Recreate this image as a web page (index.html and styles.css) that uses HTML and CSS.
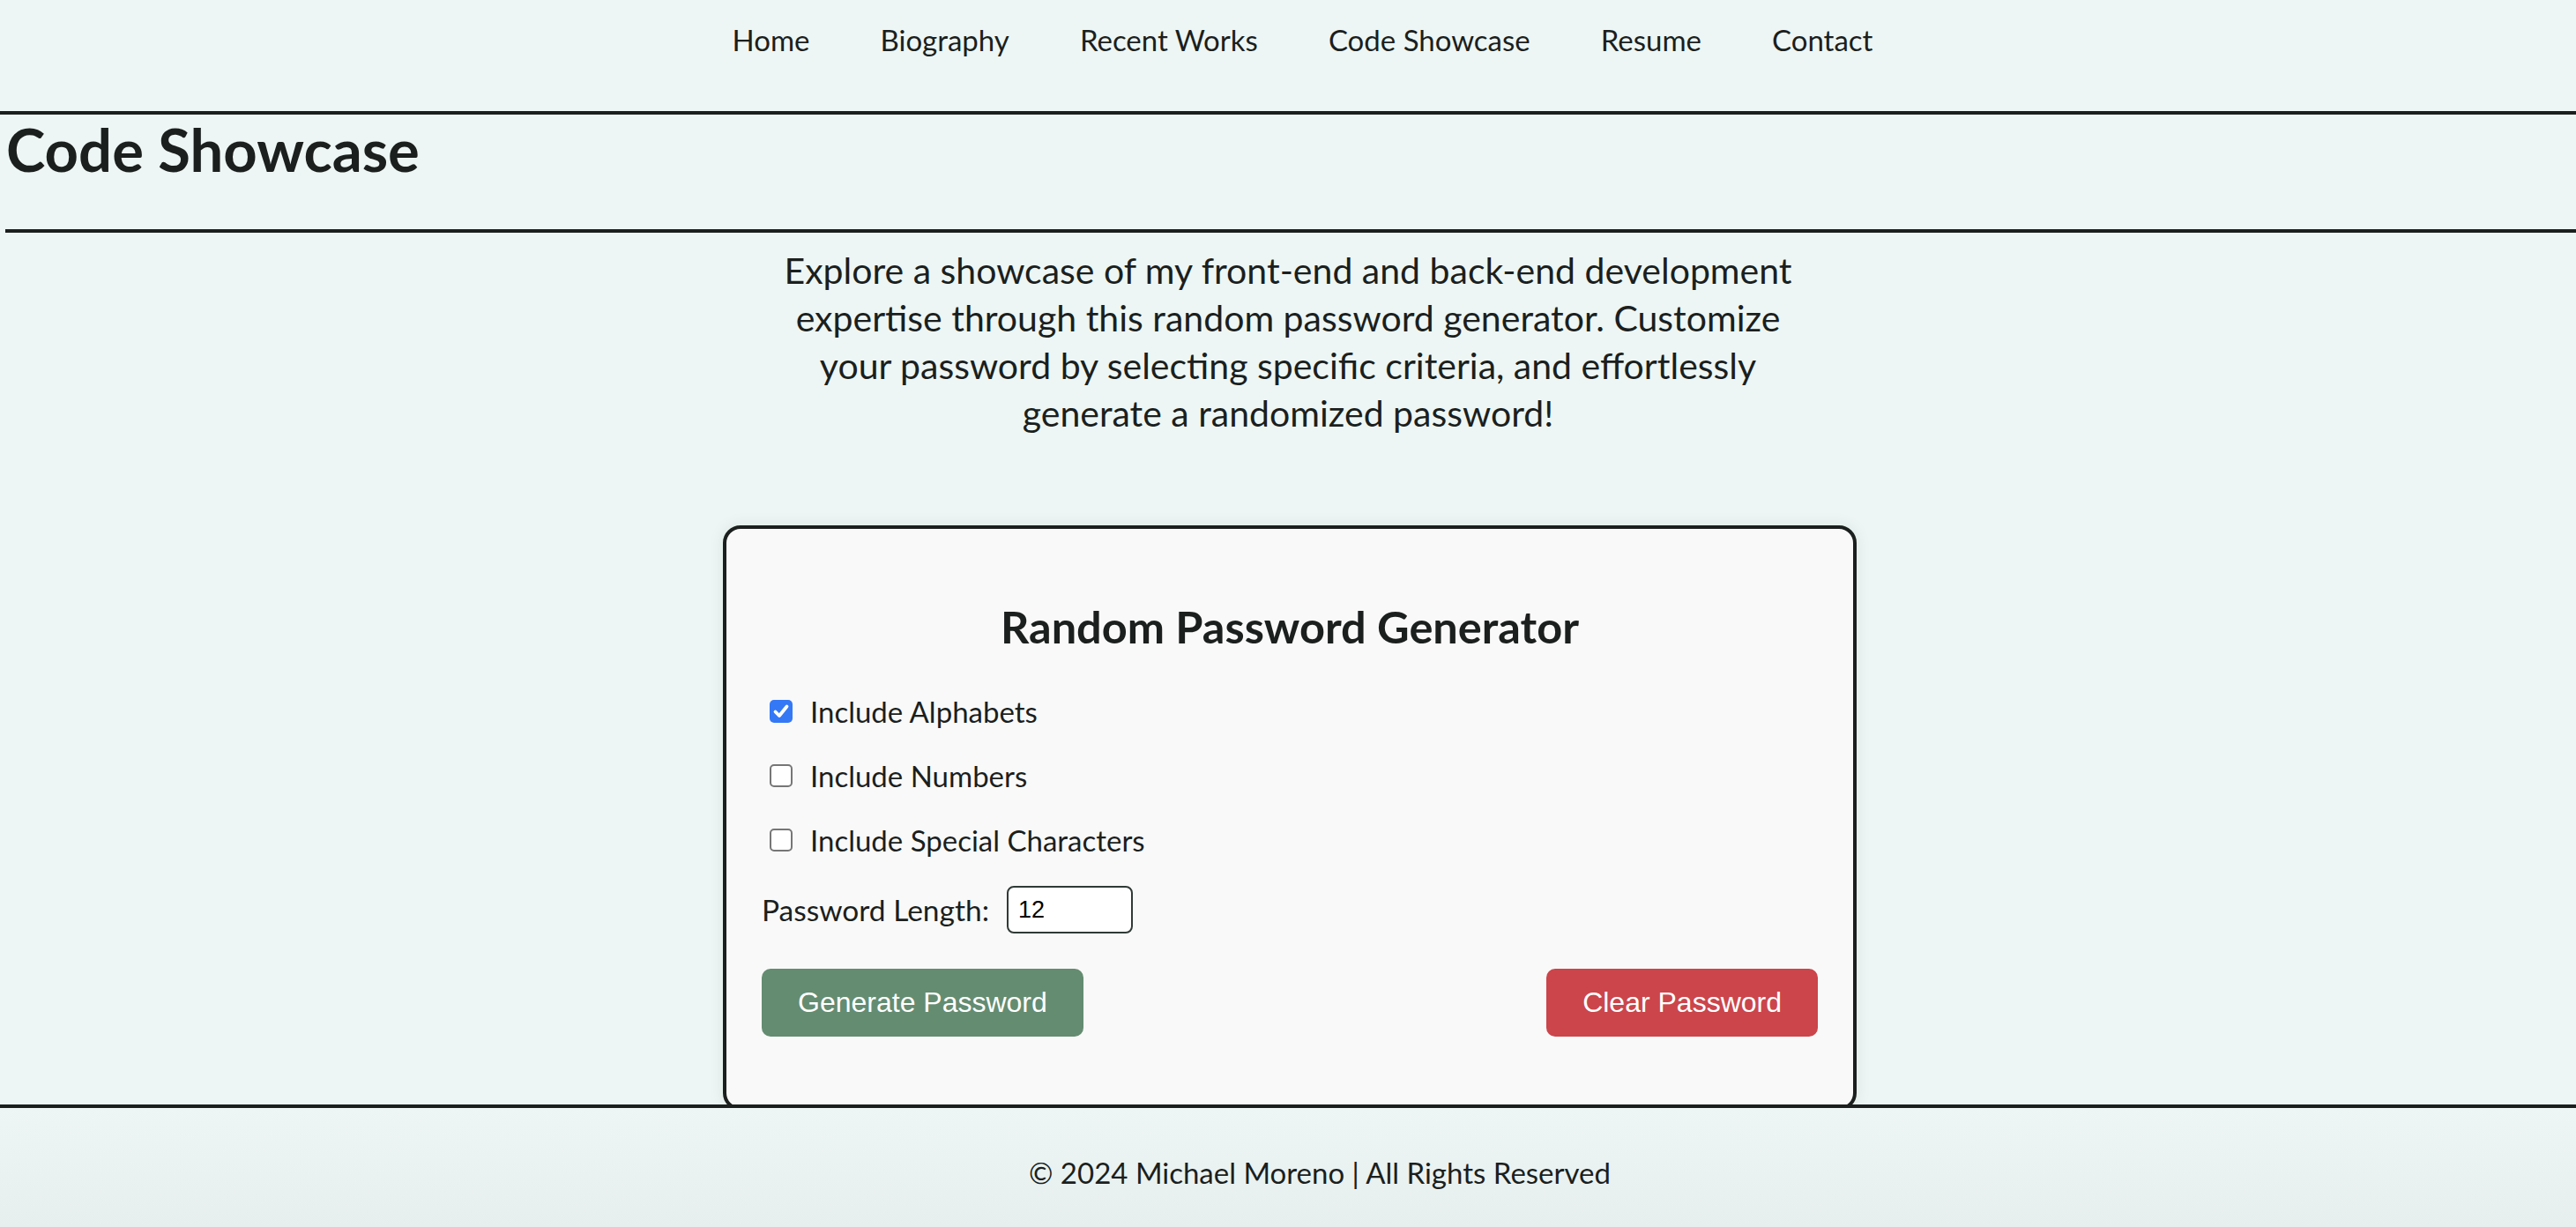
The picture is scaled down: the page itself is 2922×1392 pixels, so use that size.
FILE: index.html
```html
<!DOCTYPE html>
<html lang="en">
<head>
<meta charset="utf-8">
<title>Code Showcase</title>
<link rel="stylesheet" href="styles.css">
</head>
<body>
<header class="site-header">
  <nav class="nav">
    <a class="nav-link" href="#">Home</a>
    <a class="nav-link" href="#">Biography</a>
    <a class="nav-link" href="#">Recent Works</a>
    <a class="nav-link" href="#">Code Showcase</a>
    <a class="nav-link" href="#">Resume</a>
    <a class="nav-link" href="#">Contact</a>
  </nav>
</header>
<main class="main">
  <div class="title-wrap">
    <h1 class="page-title">Code Showcase</h1>
  </div>
  <p class="intro">Explore a showcase of my front-end and back-end development expertise through this random password generator. Customize your password by selecting specific criteria, and effortlessly generate a randomized password!</p>
  <section class="card">
    <h2 class="card-title">Random Password Generator</h2>
    <label class="option">
      <span class="box checked"><svg viewBox="0 0 26 26" width="26" height="26"><path d="M6.5 13.5 L11 18 L19.5 7.5" fill="none" stroke="#fff" stroke-width="3.8" stroke-linecap="round" stroke-linejoin="round"/></svg></span>
      <span class="option-text">Include Alphabets</span>
    </label>
    <label class="option">
      <span class="box"></span>
      <span class="option-text">Include Numbers</span>
    </label>
    <label class="option">
      <span class="box"></span>
      <span class="option-text">Include Special Characters</span>
    </label>
    <div class="length-row">
      <span class="length-label">Password Length:</span>
      <input class="length-input" type="text" value="12">
    </div>
    <div class="buttons">
      <button class="btn btn-generate" type="button">Generate Password</button>
      <button class="btn btn-clear" type="button">Clear Password</button>
    </div>
  </section>
</main>
<footer class="footer">
  <p class="footer-text">© 2024 Michael Moreno | All Rights Reserved</p>
</footer>
</body>
</html>
```

FILE: styles.css
```css
* { box-sizing: border-box; }

html, body {
  margin: 0;
  padding: 0;
}

body {
  background: #edf6f4;
  color: #1b1f1e;
  font-family: "Lato", "Noto Sans", sans-serif;
  min-height: 1392px;
}

.site-header {
  height: 130px;
  border-bottom: 4px solid #1b1f1e;
}

.nav {
  display: flex;
  justify-content: center;
  gap: 80px;
  padding-left: 33px;
  padding-top: 24px;
}

.nav-link {
  font-size: 33px;
  line-height: 42px;
  color: #1b1f1e;
  text-decoration: none;
}

.title-wrap {
  margin-left: 6px;
  border-bottom: 4px solid #1b1f1e;
  padding-left: 1px;
  height: 134px;
  padding-top: 1px;
}

.page-title {
  margin: 0;
  font-size: 67px;
  line-height: 77px;
  font-weight: 700;
}

.intro {
  width: 1180px;
  margin: 16px auto 0;
  text-align: center;
  font-size: 41px;
  line-height: 54px;
}

.card {
  width: 1286px;
  margin: 100px 0 0 calc(50% - 641px);
  background: #f9f9f9;
  border: 4px solid #1b1f1e;
  border-radius: 20px;
  padding: 82px 40px 80px;
  box-shadow: 0 0 18px rgba(0, 40, 30, 0.08);
}

.card-title {
  margin: 0 0 47px;
  text-align: center;
  font-size: 50.5px;
  line-height: 58px;
  font-weight: 700;
}

.option {
  display: flex;
  align-items: center;
  height: 40px;
  margin-bottom: 33px;
  font-size: 33px;
}

.box {
  width: 26px;
  height: 26px;
  margin-left: 9px;
  margin-right: 20px;
  border: 2px solid #767676;
  border-radius: 5px;
  background: #fff;
  display: flex;
}

.box.checked {
  border: none;
  background: #3478f6;
}

.length-row {
  display: flex;
  align-items: center;
  margin-top: -1px;
  height: 54px;
  font-size: 33.5px;
  gap: 20px;
}

.length-input {
  width: 143px;
  height: 54px;
  border: 2px solid #2f3a36;
  border-radius: 8px;
  background: #fff;
  padding: 0 11px;
  font-family: "Liberation Sans", Arial, sans-serif;
  font-size: 27px;
  color: #000;
}

.buttons {
  display: flex;
  justify-content: space-between;
  margin-top: 40px;
}

.btn {
  border: none;
  border-radius: 10px;
  color: #fff;
  font-family: "Liberation Sans", Arial, sans-serif;
  font-size: 32px;
  height: 77px;
  padding: 0 41px;
}

.btn-generate { background: #648c71; }
.btn-clear { background: #cb454b; }

.footer {
  position: fixed;
  left: 0;
  right: 0;
  bottom: 0;
  height: 139px;
  border-top: 4px solid #1b1f1e;
  background: linear-gradient(#eef6f5, #e6efee);
  display: flex;
  align-items: center;
  justify-content: center;
  padding-left: 72px;
}

.footer-text {
  margin: 0;
  padding-top: 10px;
  font-size: 33px;
}
```
